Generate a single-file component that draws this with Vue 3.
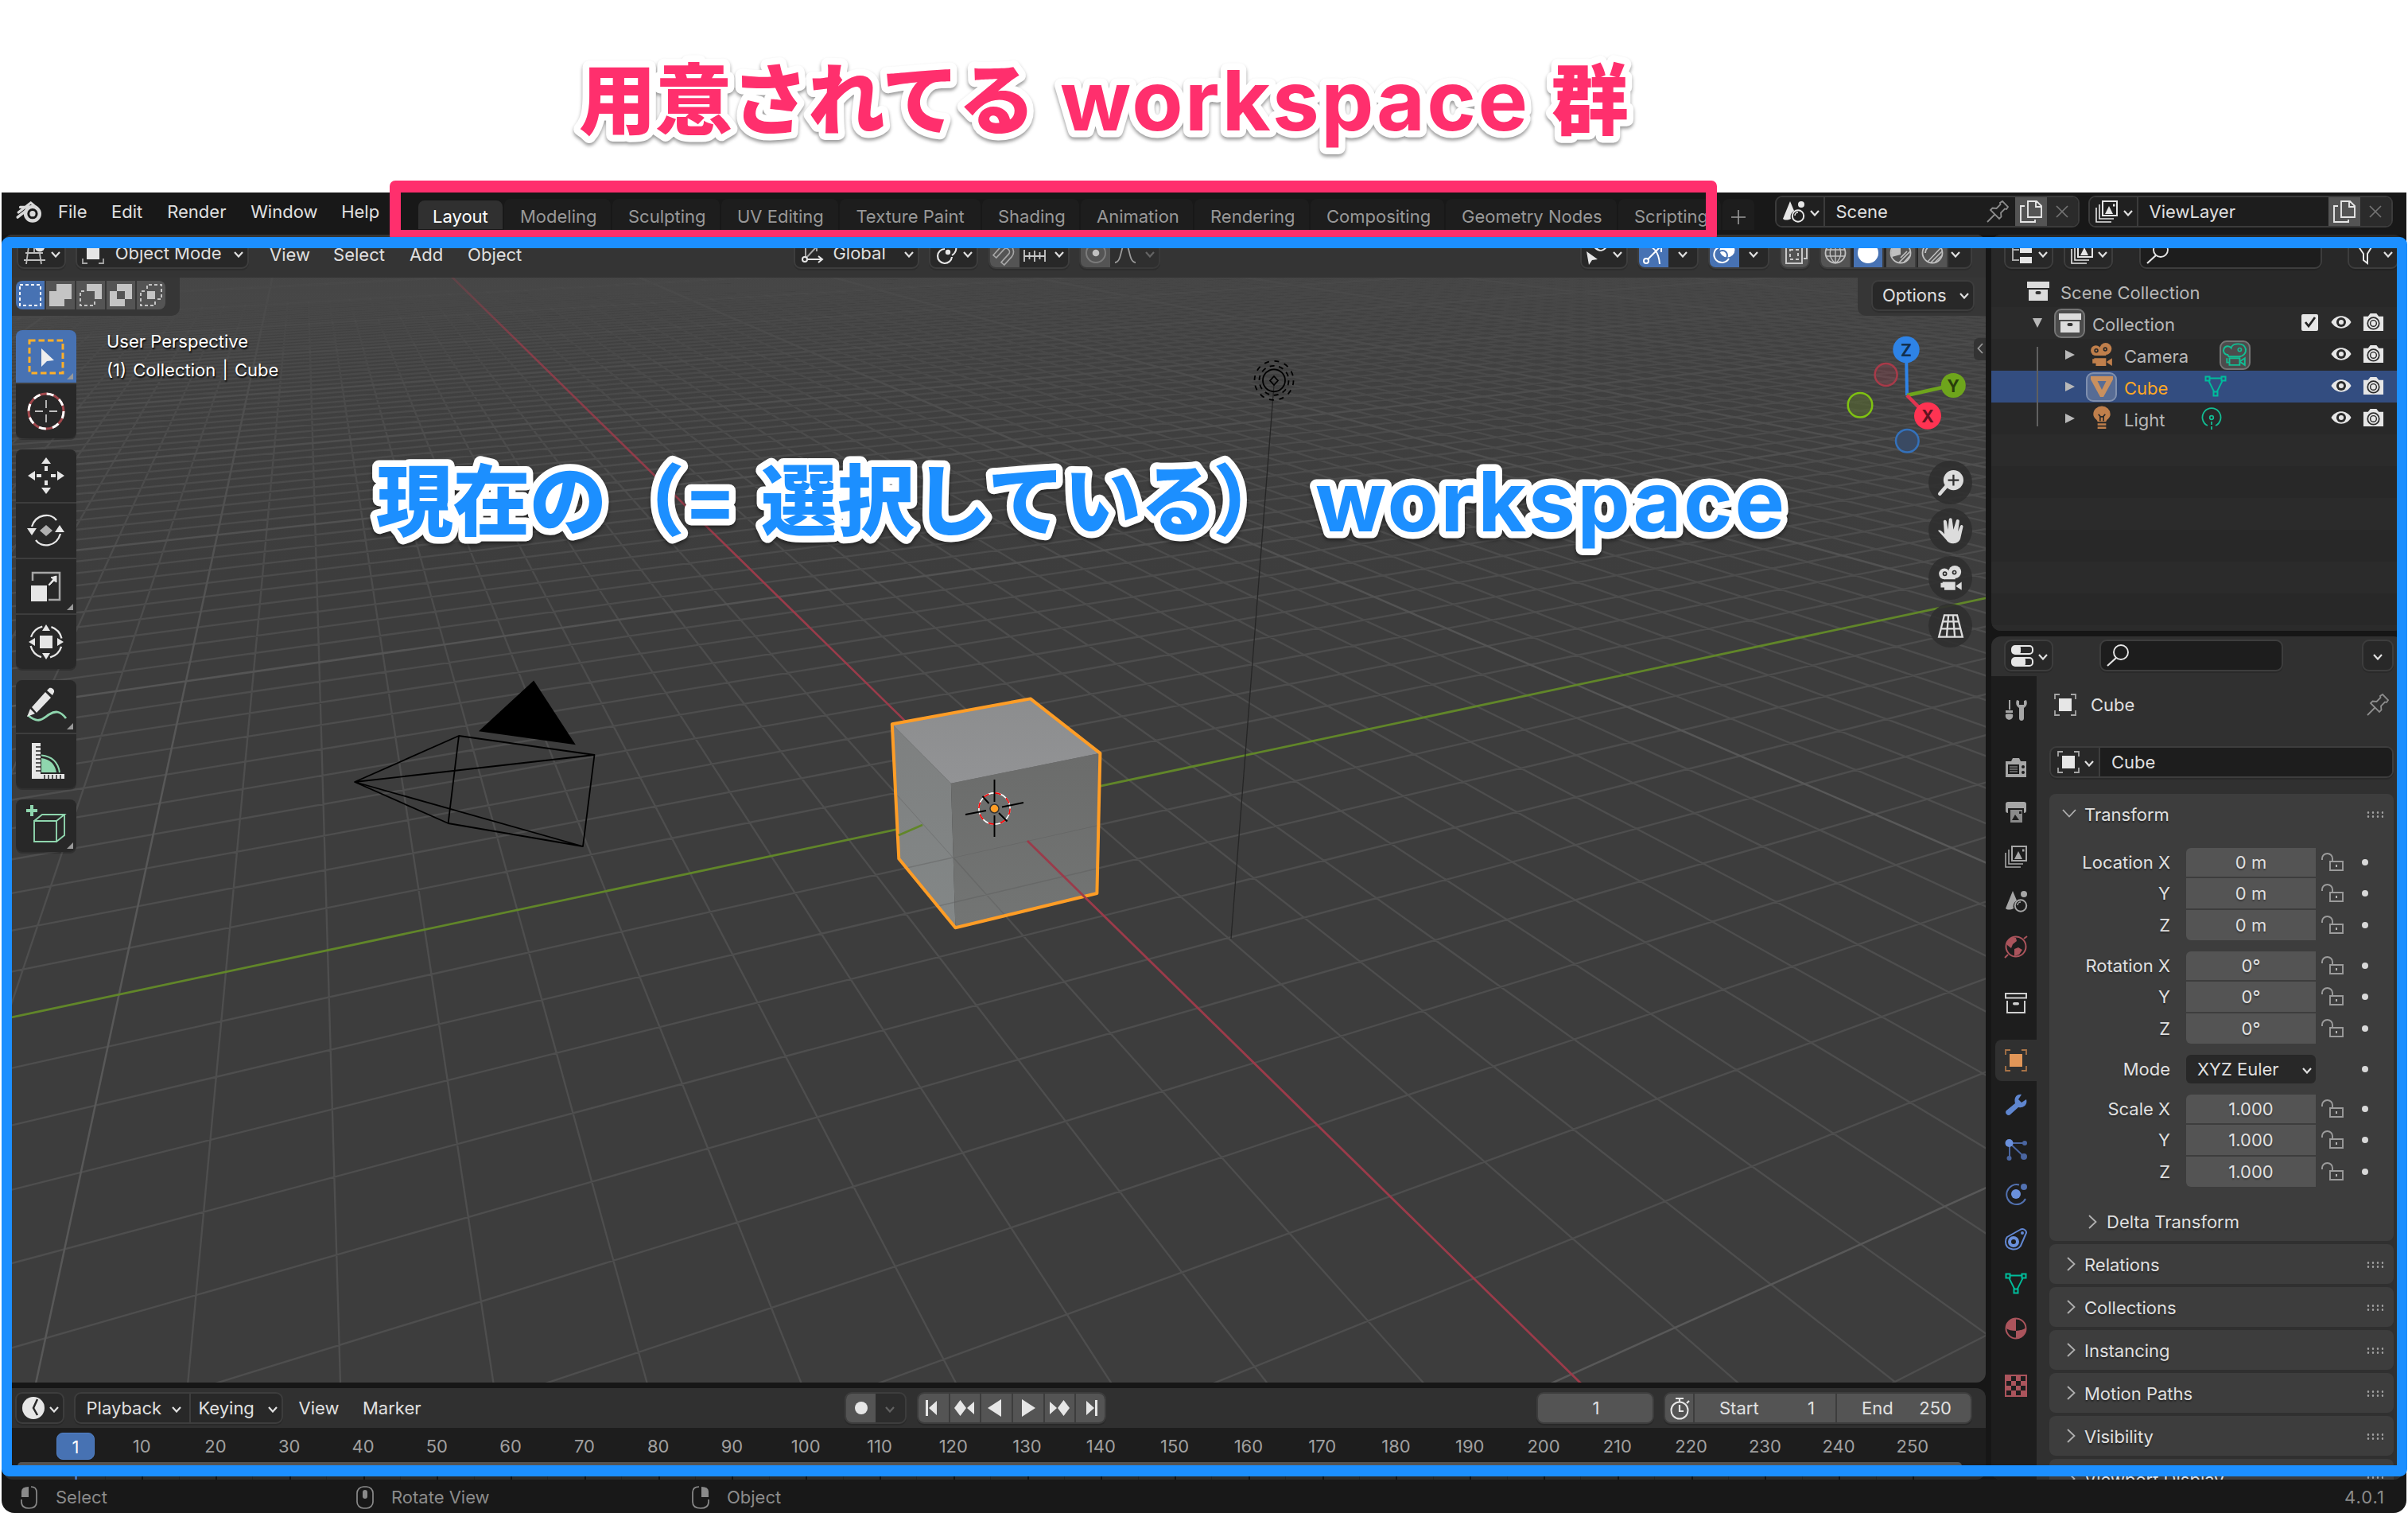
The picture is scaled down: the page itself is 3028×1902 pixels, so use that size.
<script setup>
import { h } from 'vue'

const L = '#e6e6e6'
const G = '#a6a6a6'
const pic = (c) =>
  `<path d="M9 1h18v18H9z" fill="none" stroke="${c}" stroke-width="2"/><path d="M12 17l5-10 5 10zM22 4.500h2.500v3H22z" fill="${c}"/><path d="M5 5v18h18M1 9v18h19" fill="none" stroke="${c}" stroke-width="1.600"/>`
const box = (c, d) =>
  `<rect x="6" y="6" width="16" height="16" fill="${c}"/><path d="M1 7V1h6M21 1h6v6M27 21v6h-6M7 27H1v-6" fill="none" stroke="${d}" stroke-width="1.800"/>`
const movie = (c, e) =>
  `<circle cx="7" cy="9" r="6" fill="${c}"/><circle cx="18.500" cy="7" r="7" fill="${c}"/><path d="M7 8h12v7H7zM5 18h14v9H7v-3H3v-5h2zM20 22l6-4v9l-6-4z" fill="${c}"/><circle cx="7.500" cy="9" r="1.800" fill="none" stroke="${e}" stroke-width="1.500"/><circle cx="18" cy="7.500" r="1.800" fill="none" stroke="${e}" stroke-width="1.500"/>`
const mesh = (c) =>
  `<path d="M7 3.500h14M5.500 7l7 14M22.500 7l-7 14" fill="none" stroke="${c}" stroke-width="1.800"/><path d="M1.500 1.500h5v5h-5zM21.500 1.500h5v5h-5zM11.500 20.500h5v5h-5z" fill="none" stroke="${c}" stroke-width="2"/>`
const sceneIc = (c) =>
  `<path d="M1 23L10 1l5 12a9 9 0 0 0-4 10c-4 2-8 2-10 0z" fill="${c}"/><circle cx="24" cy="5" r="4" fill="${c}"/><circle cx="20" cy="19.500" r="7.200" fill="none" stroke="${c}" stroke-width="2"/><path d="M16 19a4 4 0 0 1 4-4" fill="none" stroke="${c}" stroke-width="1.500"/>`
const dash = (x, y, w, c) =>
  `<rect x="${x}" y="${y}" width="${w}" height="${w}" fill="none" stroke="${c}" stroke-width="2" stroke-dasharray="4 3"/>`

const icons = {
  blender: `<path d="M2 14.500L16 3.500M4 8.500h11M16 3.500l7 6" fill="none" stroke="#d8d8d8" stroke-width="2.800" stroke-linecap="round"/><path d="M1 20l9-7" stroke="#d8d8d8" stroke-width="3" stroke-linecap="round"/><circle cx="18" cy="16" r="8" fill="none" stroke="#d8d8d8" stroke-width="4"/><circle cx="18" cy="16" r="3.300" fill="#d8d8d8"/>`,
  view3d: `<path d="M6 6L3 28M2 14h22M0 23h27M13 5v8M20 15l2 13" fill="none" stroke="#bdbdbd" stroke-width="1.800"/><circle cx="20" cy="6" r="6.500" fill="${L}"/>`,
  obj: box(L, G),
  objOrange: box('#e19658', '#a87347'),
  axes: `<path d="M6 0v21M6 21L20 6M20 6h-6M20 6v6M2 4l4-4 4 4" fill="none" stroke="${G}" stroke-width="2"/><path d="M8 22h18M22 18l5 4-5 4" fill="none" stroke="${L}" stroke-width="2"/><circle cx="5" cy="22" r="3" fill="#282828" stroke="${L}" stroke-width="2"/>`,
  pivot: `<path d="M11 9a9 9 0 1 0 9 10" fill="none" stroke="${L}" stroke-width="2.200"/><circle cx="15" cy="13" r="3.200" fill="${L}"/><path d="M20 17c5-3 7-9 4-14l-8-2" fill="none" stroke="${L}" stroke-width="2"/>`,
  magnet: `<g transform="rotate(42 14 14)"><path d="M4 27V12a10 10 0 0 1 20 0v15h-5.500V12a4.500 4.500 0 0 0-9 0v15z" fill="none" stroke="${G}" stroke-width="1.800"/></g>`,
  incr: `<path d="M1 10v15M27 10v15M1 18h26M7.500 13v9M14 11v14M20.500 13v9" stroke="#c8c8c8" stroke-width="1.800"/><path d="M22 1h6v3h-6z" fill="${L}"/>`,
  prop: `<circle cx="14" cy="14" r="12" fill="none" stroke="#7b7b7b" stroke-width="2"/><circle cx="14" cy="14" r="4.300" fill="#c0c0c0"/>`,
  smooth: `<path d="M1 26C10 26 8 3 14 3s4 23 13 23" fill="none" stroke="#9a9a9a" stroke-width="1.800"/>`,
  vis: `<path d="M0 12l14 10-7 1-4 6z" fill="${L}"/><path d="M8 5c5-7 15-7 19 0-4 9-15 9-19 0z" fill="${L}"/><circle cx="18" cy="5" r="3.800" fill="${L}" stroke="#282828" stroke-width="2.500"/>`,
  gizmo: `<path d="M0 4c12 0 20 8 21 24" fill="none" stroke="#fff" stroke-width="2"/><path d="M5 23L23 5M23 5h-8M23 5v8" fill="none" stroke="#fff" stroke-width="2"/><circle cx="4" cy="24" r="3" fill="#4772b3" stroke="#fff" stroke-width="2"/>`,
  overlay: `<circle cx="17" cy="10" r="9.500" fill="#fff"/><path d="M6 7a10 10 0 1 0 13 14" fill="none" stroke="#fff" stroke-width="2"/><circle cx="11" cy="17" r="6" fill="none" stroke="#4772b3" stroke-width="2"/>`,
  xray: `<path d="M1 5h20v22H1zM8 2h19v19h-4" fill="none" stroke="#c8c8c8" stroke-width="2"/><path d="M6 10h10v12H6z" fill="none" stroke="#c8c8c8" stroke-width="2" stroke-dasharray="4 3"/>`,
  wire: `<circle cx="14" cy="14" r="12.500" fill="none" stroke="#c0c0c0" stroke-width="1.800"/><path d="M2 10h24M2 18h24M14 1v26M14 1c-9 7-9 19 0 26M14 1c9 7 9 19 0 26" fill="none" stroke="#c0c0c0" stroke-width="1.400"/>`,
  solid: `<circle cx="14" cy="14" r="13" fill="#fff"/>`,
  matprev: `<circle cx="14" cy="14" r="12.500" fill="none" stroke="#c0c0c0" stroke-width="1.800"/><path d="M14 1v15L3 19A13 13 0 0 1 14 1z" fill="#c0c0c0"/><path d="M12 26L26 12M18 26l8-9M14 20l8-8" stroke="#c0c0c0" stroke-width="1.700"/>`,
  render: `<circle cx="14" cy="14" r="12.500" fill="none" stroke="#c0c0c0" stroke-width="1.800"/><path d="M12 26L26 12M17 26l9-9M8 25L25 7" stroke="#c0c0c0" stroke-width="1.500"/><path d="M5 14a9 9 0 0 1 9-9" fill="none" stroke="#c0c0c0" stroke-width="2"/>`,
  outl: `<path d="M2 0v24M2 10h8M2 23h8" fill="none" stroke="${G}" stroke-width="2"/><path d="M11 6h15v8H11zM11 19h15v8H11z" fill="${L}"/>`,
  vlay: pic(L),
  vlayG: pic(G),
  search: `<circle cx="18" cy="10" r="9" fill="none" stroke="${L}" stroke-width="1.900"/><path d="M12 17L1 27" stroke="${L}" stroke-width="2.200"/>`,
  funnel: `<path d="M3 2h22L17 15v12l-5-4v-8z" fill="none" stroke="${L}" stroke-width="2"/>`,
  coll: `<path d="M0 2h28v8H0zM2 12h24v14H2z" fill="#dcdcdc"/><rect x="10.500" y="14" width="7" height="4" rx="2" fill="#333"/>`,
  collLine: `<path d="M1 2h26v5.500H1zM3 11v15h22V11" fill="none" stroke="#d0d0d0" stroke-width="2"/><rect x="10" y="13" width="8" height="3.500" rx="1.700" fill="#d0d0d0"/>`,
  eye: `<path d="M0.500 14C7 3 21 3 27.500 14 21 25 7 25 .5 14z" fill="${L}"/><circle cx="14" cy="14" r="6.500" fill="#2a2a2a"/><circle cx="14" cy="14" r="3.300" fill="${L}"/>`,
  cam: `<path d="M1 6h6l3-4h8l3 4h6v19H1z" fill="${L}"/><circle cx="14" cy="15" r="7.500" fill="none" stroke="#2a2a2a" stroke-width="1.800"/><circle cx="14" cy="15" r="4" fill="none" stroke="#2a2a2a" stroke-width="1.500"/>`,
  camObj: movie('#c07f4b', '#282828'),
  camNav: movie('#dcdcdc', '#2f2f2f'),
  camData: `<path d="M5 14a5 5 0 1 1 4-8c1-6 15-7 17 1 1 5-3 9-8 9H6zM7 18h12v8H7zM19 22l6-4v8l-6-4M4 18v5h3" fill="none" stroke="#12bd93" stroke-width="1.800"/><circle cx="19" cy="8" r="2" fill="none" stroke="#12bd93" stroke-width="1.500"/>`,
  meshObj: `<path d="M0 1h28v4L16 27h-4L0 5z" fill="#c9905f"/><path d="M8.500 7h11L14 18z" fill="#576c95"/>`,
  mesh: mesh('#00bd9b'),
  bulb: `<path d="M9 18c0-3-5-4-5-9a10 9.500 0 0 1 20 0c0 5-5 6-5 9z" fill="#c07f4b"/><path d="M9 21h10M9 25h10" stroke="#c07f4b" stroke-width="2.200"/><path d="M10 9l2.500 3h3L18 9M12 12v5M16 12v5" fill="none" stroke="#282828" stroke-width="1.500"/>`,
  light: `<path d="M9 23A11.500 11.500 0 1 1 19 23" fill="none" stroke="#12bd93" stroke-width="1.800"/><circle cx="14" cy="13" r="2.300" fill="none" stroke="#12bd93" stroke-width="1.700"/><path d="M14 18v10" stroke="#12bd93" stroke-width="1.800" stroke-dasharray="4 2"/>`,
  propEd: `<rect x="1" y="2" width="26" height="10" rx="4" fill="none" stroke="${L}" stroke-width="2"/><rect x="1" y="2" width="11" height="10" rx="3" fill="${L}"/><rect x="1" y="17" width="26" height="10" rx="4" fill="none" stroke="${L}" stroke-width="2"/><rect x="1" y="17" width="17" height="10" rx="3" fill="${L}"/>`,
  pin: `<path d="M20 1l7 7-2 3-2-.5-5 5 .5 5-2.500 2.500L5 12l2.500-2.500 5 .5 5-5L17 3zM10 18L1 27" fill="none" stroke="#8c8c8c" stroke-width="1.800"/>`,
  copy: `<path d="M10 1h11l6 6v14H10zM20 1v7h7M6 7H1v20h18v-3" fill="none" stroke="${L}" stroke-width="1.900"/>`,
  x: `<path d="M7 7l14 14M21 7L7 21" stroke="#747474" stroke-width="1.700"/>`,
  tool: `<path d="M6 1v12" stroke="${G}" stroke-width="2"/><path d="M1 14h9v3h-9zM1 19c0-1 9-1 9 0 2 9-11 9-9 0z" fill="${G}"/><path d="M15 1c-2 5 0 8 3 10v13c0 4 6 4 6 0V11c3-2 5-5 3-10l-3 1v5h-6V2z" fill="${G}"/>`,
  rend: `<path d="M1 6h7l2-4h8l2 4h7v20H1z" fill="${G}"/><path d="M4 10h14v12H4z" fill="#1d1d1d"/><path d="M6 13h10M6 16h10M6 19h10" stroke="${G}" stroke-width="1"/><circle cx="23" cy="13" r="2" fill="#1d1d1d"/><circle cx="23" cy="20" r="2" fill="#1d1d1d"/>`,
  out: `<path d="M1 12V4q0-3 3-3h20q3 0 3 3v8q0 3-3 3V9H4v6q-3 0-3-3z" fill="${G}"/><path d="M7 11h15v16H7z" fill="#8a8a8a"/><path d="M9 24l4-7 5 7zM18 13h3v3h-3z" fill="#1d1d1d"/>`,
  sceneL: sceneIc(L),
  sceneG: sceneIc(G),
  world: `<circle cx="14" cy="14" r="12.500" fill="none" stroke="#ab545c" stroke-width="2"/><path d="M24 4l4-3M4 24l-4 4" stroke="#ab545c" stroke-width="2"/><path d="M3 8c3-6 8-6 11-5l1 4-5 4-2 5-5-4zM12 17l5-2 5 3-4 6-6 2z" fill="#ab545c"/>`,
  wrench: `<path d="M2 21L13 12C11 5 15 0 21 1l-4 6 4 4 6-4c2 7-4 11-10 10L7 26c-3 3-8-2-5-5z" fill="#5f86d0"/>`,
  part: `<path d="M6 6h18M6 6v18M6 6l18 17" stroke="#4a65a0" stroke-width="2"/><circle cx="5.500" cy="6" r="5" fill="#6a90dc"/><circle cx="25" cy="6" r="3" fill="#4a65a0"/><circle cx="5.500" cy="25" r="3" fill="#4a65a0"/><circle cx="24" cy="23" r="4" fill="#4a65a0"/>`,
  phys: `<path d="M18 2.500A12.500 12.500 0 1 0 26 20" fill="none" stroke="#5271b0" stroke-width="2"/><circle cx="14" cy="14" r="6" fill="#6a90dc"/><circle cx="24" cy="5" r="4" fill="#5271b0"/>`,
  cons: `<path d="M3 11L19 2c5-3 10 2 7 6L20 22C16 29 1 28 1 17q0-4 2-6z" fill="none" stroke="#6287d2" stroke-width="2"/><circle cx="11" cy="17" r="5" fill="none" stroke="#6a90dc" stroke-width="4"/><circle cx="22" cy="6" r="2" fill="#6287d2"/>`,
  mat: `<circle cx="14" cy="14" r="12.500" fill="none" stroke="#ab545c" stroke-width="2"/><path d="M14 1v16C9 17 4 16 1 13 2 6 7 1 14 1zM14 17c5 0 10-2 13-4 0 8-6 14-13 14z" fill="#ab545c"/>`,
  tex: `<rect x="1" y="1" width="26" height="26" fill="none" stroke="#ab545c" stroke-width="2"/><path d="M2 2h6v6H2zM14 2h6v6h-6zM8 8h6v6H8zM20 8h6v6h-6zM2 14h6v6H2zM14 14h6v6h-6zM8 20h6v6H8zM20 20h6v6h-6z" fill="#ab545c"/>`,
  lock: `<path d="M1 10V8a6.500 6 0 0 1 13 0v5M11 12h16v11H11z" fill="none" stroke="#9b9b9b" stroke-width="1.900"/><path d="M19 16v3" stroke="#b5b5b5" stroke-width="2"/>`,
  clock: `<circle cx="14" cy="14" r="14" fill="${L}"/><path d="M19 3l-5 11 5 9" fill="none" stroke="#282828" stroke-width="2.500"/>`,
  stop: `<circle cx="14" cy="17" r="10.500" fill="none" stroke="${L}" stroke-width="2"/><path d="M14 10v8h5M14 6V2M9 2h10M23 8l3-3" fill="none" stroke="${L}" stroke-width="2.200"/>`,
  rec: `<circle cx="14" cy="14" r="8" fill="${L}"/>`,
  first: `<path d="M5 4h3v20H5zM9 14l10-9v18z" fill="${L}"/>`,
  prevK: `<path d="M1 14L8.500 4 16 14 8.500 24zM17 14l9-8v16z" fill="${L}"/>`,
  prev: `<path d="M4 14L21 3v22z" fill="${L}"/>`,
  next: `<path d="M24 14L7 3v22z" fill="${L}"/>`,
  nextK: `<path d="M27 14L19.500 4 12 14l7.500 10zM11 14L2 6v16z" fill="${L}"/>`,
  last: `<path d="M23 4h-3v20h3zM19 14L9 5v18z" fill="${L}"/>`,
  m1: `<path d="M1 14V7q0-6 9-6v13z" fill="#8a8a8a"/><path d="M13 1q7 0 7 7v12q0 8-9.500 8T1 20v-3" fill="none" stroke="#8a8a8a" stroke-width="1.700"/>`,
  m2: `<rect x="1" y="1" width="20" height="27" rx="8" fill="none" stroke="#8a8a8a" stroke-width="1.700"/><rect x="8" y="5" width="6" height="11" rx="3" fill="#8a8a8a"/>`,
  m3: `<path d="M21 14V7q0-6-9-6v13z" fill="#8a8a8a"/><path d="M9 1Q1 1 1 8v12q0 8 10 8t10-8v-3" fill="none" stroke="#8a8a8a" stroke-width="1.700"/>`,
  sSet: dash(1, 1, 26, '#fff'),
  sExt: `<path d="M9 0h19v19h-9v9H0V9h9z" fill="#c4c4c4"/>`,
  sSub: `<path d="M9 0h19v19h-9V9H9z" fill="#c4c4c4"/><path d="M6 9H1v18h18v-5" fill="none" stroke="#c4c4c4" stroke-width="2" stroke-dasharray="4 3"/>`,
  sInv: `<path fill-rule="evenodd" d="M9 0h19v19h-9v9H0V9h9zM9 9v10h10V9z" fill="#c4c4c4"/>`,
  sInt: `<path d="M9 9h10v10H9z" fill="#c4c4c4"/><path d="M9 6V1h18v18h-5M6 9H1v18h18v-5" fill="none" stroke="#c4c4c4" stroke-width="2" stroke-dasharray="4 3"/>`,
  zoom: `<circle cx="17" cy="11" r="11" fill="#dcdcdc"/><path d="M9 18l-7 8" stroke="#dcdcdc" stroke-width="4" stroke-linecap="round"/><path d="M17 5v12M11 11h12" stroke="#2f2f2f" stroke-width="2"/>`,
  hand: `<path d="M0 14c2-1 4 0 7 4L6 4c0-2 3-2 3.500 0L11 13l1-11c0-2.500 3.500-2.500 3.500 0L17 13l3-10c.5-2 3.500-1.500 3.500.5L22 15l2.500-6c1-2 3.500-1 3 1L25 21c-1 9-13 9-16 3z" fill="#dcdcdc"/>`,
  persp: `<path d="M7 2h14l6 24H1zM5 9h18M3 17h22M11.500 2L9.500 26M16.500 2l2 24" fill="none" stroke="#dcdcdc" stroke-width="2"/>`
}
const tools = {
  tSel: `<rect x="3" y="4" width="42" height="41" fill="none" stroke="#ffaf29" stroke-width="3" stroke-dasharray="7.500 4"/><path d="M18 14l16 15-9 1-7 7z" fill="#eee"/>`,
  tCur: `<circle cx="24" cy="24" r="22" fill="none" stroke="#a0474c" stroke-width="3"/><circle cx="24" cy="24" r="22" fill="none" stroke="#fff" stroke-width="3" stroke-dasharray="9 8.280"/><path d="M24 10v10M24 28v10M10 24h10M28 24h10" stroke="#c0c0c0" stroke-width="1.800"/>`,
  tMove: `<path d="M24 1l6 8H18zM24 47l6-8H18zM1 24l9-6v12zM47 24l-9-6v12zM22 12h4v6h-4zM22 30h4v6h-4zM12 22h6v4h-6zM30 22h6v4h-6z" fill="${L}"/>`,
  tRot: `<path d="M6 19C11 3 30 1 37 11M42 28C37 45 18 46 11 36" fill="none" stroke="${L}" stroke-width="2.300"/><path d="M0 21h12l-6 9zM35 26h12l-6-9z" fill="${L}"/><path d="M24 17l8 7-8 7-8-7z" fill="#b0b0b0"/>`,
  tScale: `<path d="M7 17V7h34v34H27" fill="none" stroke="${G}" stroke-width="2.500"/><path d="M5 23h20v20H5z" fill="${L}"/><path d="M27 22l6-7-3-2 7-2 0 8-3-2-6 6z" fill="${L}" stroke="${L}"/>`,
  tXf: `<circle cx="24" cy="24" r="20" fill="none" stroke="${L}" stroke-width="2.300" stroke-dasharray="20 11.400" stroke-dashoffset="-6"/><path d="M16 16h16v16H16zM24 2l5 8H19zM24 46l5-8H19zM2 24l8-5v10zM46 24l-8-5v10z" fill="${L}"/>`,
  tAnn: `<path d="M1 35C15 47 20 39 28 34s14-4 21 5" fill="none" stroke="#8fd6ae" stroke-width="2.800"/><path d="M0 37l4-10 6 6zM6 25L23 6l7 7-18 19zM25 4l3-3c3-1 7 2 6 5l-2 4z" fill="${L}"/>`,
  tMeas: `<path d="M6 1h11v39h30v6H6zM6 44h-1z" fill="${L}"/><path d="M11 6h6M11 11h6M11 16h6M11 21h6M11 26h6M11 31h6M11 36h6M22 46v-5M27 46v-5M32 46v-5M37 46v-5M42 46v-5" stroke="#282828" stroke-width="1.500"/><path d="M18 38V20q16 2 19 18z" fill="#8fd6ae"/><path d="M18 16.500q20 2 23 21.500" fill="none" stroke="#8fd6ae" stroke-width="2"/>`,
  tAdd: `<path d="M6-2v14M-1 5h14" stroke="#8fd6ae" stroke-width="4"/><path d="M9 18h28v26H9zM9 18l10-8h28l-10 8M47 10v26l-10 8" fill="none" stroke="#8fd6ae" stroke-width="1.900"/>`
}

const Ic = (p) => h('svg', { viewBox: '0 0 28 28', width: p.s || 28, height: p.s || 28, style: 'overflow:visible;flex:none;display:block', innerHTML: icons[p.n] })
Ic.props = ['n', 's']
const Tool = (p) => h('svg', { viewBox: '0 0 48 48', width: 48, height: 48, style: 'overflow:visible;display:block', innerHTML: tools[p.n] })
Tool.props = ['n']
const Chev = (p) => h('svg', { viewBox: '0 0 12 8', width: 12, height: 8, style: 'flex:none;display:block;margin-top:3px;opacity:' + (p.dim ? 0.3 : 1), innerHTML: '<path d="M1 1l5 5.500L11 1" fill="none" stroke="#e0e0e0" stroke-width="2.200"/>' })
Chev.props = ['dim']

const menus = [['File', 67], ['Edit', 70.2], ['Render', 105], ['Window', 114], ['Help', 60]]
const tabs = [
  ['Layout', 108], ['Modeling', 136], ['Sculpting', 137], ['UV Editing', 149.4], ['Texture Paint', 178.6], ['Shading', 124],
  ['Animation', 143], ['Rendering', 146], ['Compositing', 170], ['Geometry Nodes', 217], ['Scripting', 131]
]
const toolGroups = [
  [['tSel', 1], ['tCur', 0]],
  [['tMove', 0], ['tRot', 0], ['tScale', 1], ['tXf', 0]],
  [['tAnn', 1], ['tMeas', 0]],
  [['tAdd', 1]]
]
const propTabs = [
  ['tool'],
  ['rend', 'out', 'vlayG', 'sceneG', 'world'],
  ['collLine'],
  ['objOrange', 'wrench', 'part', 'phys', 'cons', 'mesh', 'mat'],
  ['tex']
]
const groups = [
  [['Location X', '0 m'], ['Y', '0 m'], ['Z', '0 m']],
  [['Rotation X', '0°'], ['Y', '0°'], ['Z', '0°']],
  [['Mode', 'XYZ Euler', 1]],
  [['Scale X', '1.000'], ['Y', '1.000'], ['Z', '1.000']]
]
const panels = ['Relations', 'Collections', 'Instancing', 'Motion Paths', 'Visibility', 'Viewport Display']
const frames = Array.from({ length: 25 }, (_, i) => (i + 1) * 10)

// Perspective projection of the ground plane
const CX = 1250.5, CY = 1016.5, F = 1735, D = 17.99
const cam = (x, y, z) => [
  0.41 * x + 0.912 * y - 0.0133 * z,
  -0.4017 * x + 0.1936 * y + 0.895 * z,
  D - (0.8188 * x - 0.3617 * y + 0.4458 * z)
]
const toPx = ([a, b, d]) => [CX + (F * a) / d, CY - (F * b) / d]
const px = (x, y, z) => toPx(cam(x, y, z)).map((v) => v.toFixed(1)).join(',')
const seg = (p, q) => {
  let a = cam(...p), b = cam(...q)
  const n = 1
  if (a[2] < n && b[2] < n) return ''
  const cut = (u, v) => { const t = (n - u[2]) / (v[2] - u[2]); return u.map((c, i) => c + t * (v[i] - c)) }
  if (a[2] < n) a = cut(a, b)
  if (b[2] < n) b = cut(b, a)
  const A = toPx(a), B = toPx(b)
  return `M${A[0].toFixed(1)} ${A[1].toFixed(1)}L${B[0].toFixed(1)} ${B[1].toFixed(1)}`
}
const R = 200
let minor = '', major = ''
for (let k = -R; k <= R; k++) {
  if (!k) continue
  const s = seg([k, -R, 0], [k, R, 0]) + seg([-R, k, 0], [R, k, 0])
  if (k % 10) minor += s
  else major += s
}
const low = [px(-1, -1, 0), px(1, -1, 0), px(1, 1, 0), px(1, 1, -1), px(1, -1, -1), px(-1, -1, -1)].join(' ')
const face = {
  top: [px(-1, -1, 1), px(-1, 1, 1), px(1, 1, 1), px(1, -1, 1)].join(' '),
  left: [px(-1, -1, 1), px(1, -1, 1), px(1, -1, -1), px(-1, -1, -1)].join(' '),
  right: [px(1, -1, 1), px(1, 1, 1), px(1, 1, -1), px(1, -1, -1)].join(' '),
  rim: [px(-1, -1, 1), px(-1, 1, 1), px(1, 1, 1), px(1, 1, -1), px(1, -1, -1), px(-1, -1, -1)].join(' ')
}
const axisX1 = seg([-R, 0, 0], [-1, 0, 0])
const axisX2 = seg([1, 0, 0], [30, 0, 0])
const axisY1 = seg([0, -40, 0], [0, -1, 0])
const axisY2 = seg([0, 1, 0], [0, R, 0])
</script>

<template>
  <div class="page">
    <div class="app">
      <header class="topbar">
        <Ic n="blender" s="31" class="logo" />
        <nav class="menus"><span v-for="m in menus" :key="m[0]" :style="{ width: m[1] + 'px' }">{{ m[0] }}</span></nav>
        <div class="tabs">
          <span v-for="(t, i) in tabs" :key="t[0]" class="tab" :class="{ on: !i }" :style="{ width: t[1] - 2 + 'px' }">{{ t[0] }}</span>
          <span class="tab plus"><svg width="20" height="20"><path d="M10 1v18M1 10h18" stroke="#9a9a9a" stroke-width="1.600" /></svg></span>
        </div>
        <div class="idbox first">
          <div class="idicon"><Ic n="sceneL" /><Chev /></div>
          <div class="idname"><span>Scene</span><Ic n="pin" /></div>
          <div class="idbtn lit"><Ic n="copy" /></div><div class="idbtn"><Ic n="x" /></div>
        </div>
        <div class="idbox">
          <div class="idicon"><Ic n="vlay" /><Chev /></div>
          <div class="idname"><span>ViewLayer</span></div>
          <div class="idbtn lit"><Ic n="copy" /></div><div class="idbtn"><Ic n="x" /></div>
        </div>
      </header>

      <div class="work">
        <div class="left">
          <section class="viewport">
            <svg class="scene" viewBox="4 295 2493 1443" width="2493" height="1443">
              <defs>
                <linearGradient id="gm" gradientUnits="userSpaceOnUse" x1="0" y1="295" x2="0" y2="1000">
                  <stop offset="0" stop-color="#525252" stop-opacity=".12" /><stop offset=".12" stop-color="#525252" stop-opacity=".34" />
                  <stop offset=".35" stop-color="#4f4f4f" stop-opacity=".75" /><stop offset="1" stop-color="#4e4e4e" />
                </linearGradient>
                <linearGradient id="gj" gradientUnits="userSpaceOnUse" x1="0" y1="295" x2="0" y2="1000">
                  <stop offset="0" stop-color="#4b4b4b" stop-opacity=".4" /><stop offset=".3" stop-color="#4e4e4e" /><stop offset="1" stop-color="#585858" />
                </linearGradient>
                <linearGradient id="gr" gradientUnits="userSpaceOnUse" x1="0" y1="295" x2="0" y2="700">
                  <stop offset="0" stop-color="#9b3b4a" stop-opacity="0" /><stop offset=".35" stop-color="#9b3b4a" stop-opacity=".75" /><stop offset="1" stop-color="#9b3b4a" />
                </linearGradient>
                <linearGradient id="bg" x1="0" y1="0" x2="0" y2="1"><stop offset="0" stop-color="#424242" /><stop offset=".3" stop-color="#3d3d3d" /></linearGradient>
                <linearGradient id="ft" x1="0" y1="0" x2="0" y2="1"><stop offset="0" stop-color="#8c8d8e" /><stop offset="1" stop-color="#929395" /></linearGradient>
                <linearGradient id="fl" x1="0" y1="0" x2="0" y2="1"><stop offset="0" stop-color="#7e8080" /><stop offset="1" stop-color="#838787" /></linearGradient>
                <linearGradient id="fr" x1="0" y1="0" x2="0" y2="1"><stop offset="0" stop-color="#6b6c6b" /><stop offset="1" stop-color="#737574" /></linearGradient>
                <clipPath id="lowc"><polygon :points="low" /></clipPath>
              </defs>
              <rect x="4" y="295" width="2493" height="1443" fill="url(#bg)" />
              <g fill="none" stroke-width="2.300">
                <path :d="minor" stroke="url(#gm)" /><path :d="major" stroke="url(#gj)" stroke-width="2.500" />
                <path :d="axisX1" stroke="url(#gr)" stroke-width="2.600" />
                <path :d="axisY1 + axisY2" stroke="#618629" stroke-width="2.800" />
              </g>
              <path d="M1602 484L1548 1180" stroke="#262626" stroke-width="1.300" />
              <g fill="none" stroke="#000" stroke-width="1.800">
                <path d="M1602 473l5 5.500-5 5.500-5-5.500z" /><circle cx="1602" cy="478.300" r="14" />
                <circle cx="1602" cy="478.300" r="18.500" stroke-dasharray="6 5.600" /><circle cx="1602" cy="478.300" r="24.500" stroke-dasharray="6 6.800" />
                <path d="M446 983L577 925 747.500 949 733 1064 563.600 1035zM577 925L563.600 1035M446 983L747.500 949M446 983L733 1064" stroke-linejoin="round" />
                <path d="M671 857L604 918.500 722 935z" fill="#000" />
              </g>
              <polygon :points="face.left" fill="url(#fl)" /><polygon :points="face.right" fill="url(#fr)" /><polygon :points="face.top" fill="url(#ft)" />
              <g clip-path="url(#lowc)" fill="none" opacity=".35"><path :d="minor" stroke="#555" stroke-width="1.500" /></g>
              <polygon :points="face.rim" fill="none" stroke="#ff9d26" stroke-width="4" stroke-linejoin="round" />
              <path :d="axisX2" stroke="#9b3b4a" stroke-width="2.800" />
              <path d="M1130 1049L1160 1036" stroke="#618629" stroke-width="2.800" transform="translate(0 1)" />
              <g fill="none">
                <circle cx="1250.500" cy="1016.500" r="19.600" stroke="#fff" stroke-width="1.600" />
                <circle cx="1250.500" cy="1016.500" r="19.600" stroke="#f00" stroke-width="1.600" stroke-dasharray="7.700 7.700" />
                <path d="M1250.500 980v28M1250.500 1025v27M1214 1024l26-5M1260 1014.500l27-5.500M1235.500 1001l8 9M1256 1022l10.500 10.500" stroke="#000" stroke-width="1.900" />
                <circle cx="1250.500" cy="1016.500" r="5.500" fill="#ff9d26" stroke="#333" stroke-width="1.500" />
              </g>
              <g class="giz">
                <circle cx="2371.600" cy="471" r="14" fill="#ff335222" stroke="#a83a49" stroke-width="2.500" />
                <circle cx="2339" cy="509.300" r="15.300" fill="#56693099" stroke="#7fc211" stroke-width="2.500" />
                <circle cx="2398.300" cy="554.300" r="14.300" fill="#3a4a63" stroke="#3471ba" stroke-width="2.500" />
                <path d="M2398 497L2397 440" stroke="#2e83e6" stroke-width="4" /><path d="M2398 497L2456 484" stroke="#6ea51c" stroke-width="4.500" /><path d="M2398 497L2424 523" stroke="#e03450" stroke-width="4.500" />
                <circle cx="2397" cy="439.500" r="16.700" fill="#2e83e6" /><circle cx="2456.300" cy="484.500" r="15.500" fill="#6ea51c" /><circle cx="2424" cy="522.700" r="17" fill="#ff3352" />
                <text x="2397" y="447.500" fill="#12304f">Z</text><text x="2456.300" y="492.500" fill="#293d0b">Y</text><text x="2424" y="530.500" fill="#5e1320">X</text>
              </g>
            </svg>

            <div class="vhead">
              <div class="w w-ed"><Ic n="view3d" /><Chev /></div>
              <div class="w w-mode"><Ic n="obj" /><span>Object Mode</span><Chev /></div>
              <nav class="vmenu"><span class="m-view">View</span><span class="m-sel">Select</span><span class="m-add">Add</span><span>Object</span></nav>
              <div class="w w-glob"><Ic n="axes" /><span>Global</span><Chev /></div>
              <div class="w w-piv"><Ic n="pivot" /><Chev /></div>
              <div class="w w-snap"><b class="seg g"><Ic n="magnet" s="26" /></b><Ic n="incr" class="mid" /><Chev /></div>
              <div class="w w-snap dimw"><b class="seg g"><Ic n="prop" /></b><Ic n="smooth" class="mid" /><Chev dim="1" /></div>
              <div class="w w-vis"><Ic n="vis" /><Chev /></div>
              <div class="w w-tog"><b class="seg blue"><Ic n="gizmo" /></b><Chev /></div>
              <div class="w w-tog"><b class="seg blue"><Ic n="overlay" /></b><Chev /></div>
              <div class="w w-x"><b class="seg g"><Ic n="xray" /></b></div>
              <div class="w w-shade"><b class="seg g"><Ic n="wire" /></b><b class="seg blue"><Ic n="solid" /></b><b class="seg g"><Ic n="matprev" /></b><b class="seg g"><Ic n="render" /></b><Chev /></div>
            </div>
            <div class="vsub">
              <div class="selmodes"><b v-for="(s, i) in ['sSet', 'sExt', 'sSub', 'sInv', 'sInt']" :key="s" :class="{ blue: !i }"><Ic :n="s" /></b></div>
              <div class="optwrap"><div class="w opt"><span>Options</span><Chev /></div></div>
            </div>
            <div class="toolbar">
              <div v-for="(g, gi) in toolGroups" :key="gi" class="tg">
                <div v-for="(t, ti) in g" :key="t[0]" class="tool" :class="{ blue: !gi && !ti, fst: !ti }"><Tool :n="t[0]" /><i v-if="t[1]"></i></div>
              </div>
            </div>
            <div class="info"><div>User Perspective</div><div class="obinfo">(1) Collection | Cube</div></div>
            <div class="navb"><b v-for="n in ['zoom', 'hand', 'camNav', 'persp']" :key="n"><Ic :n="n" s="32" /></b></div>
            <div class="nflap"><svg width="8" height="14"><path d="M7 1L1.500 7 7 13" fill="none" stroke="#999" stroke-width="1.800" /></svg></div>
          </section>

          <section class="timeline">
            <div class="thead">
              <div class="w w-ted"><Ic n="clock" /><Chev /></div>
              <div class="w w-pk"><span class="pb">Playback</span><Chev /><i class="dv"></i><span class="ky">Keying</span><Chev /></div>
              <span class="tm1">View</span><span class="tm2">Marker</span>
              <div class="w w-rec"><b class="seg g"><Ic n="rec" /></b><Chev dim="1" class="cc" /></div>
              <div class="w w-play"><b v-for="n in ['first', 'prevK', 'prev', 'next', 'nextK', 'last']" :key="n"><Ic :n="n" /></b></div>
              <div class="w w-cur">1</div>
              <div class="w w-range"><b><Ic n="stop" /></b><div class="st"><span>Start</span><span>1</span></div><div class="en"><span>End</span><span>250</span></div></div>
            </div>
            <div class="ruler">
              <span v-for="f in frames" :key="f" :style="{ left: 174.2 + (f - 10) * 9.278 + 'px' }">{{ f }}</span>
              <em>1</em>
            </div>
            <div class="tbar"></div>
            <div class="ticks"><i v-for="f in 50" :key="f" :class="{ big: f % 2 === 0 }" :style="{ left: 81.4 + f * 46.39 + 'px' }"></i><em></em></div>
          </section>
        </div>

        <div class="right">
          <section class="outliner">
            <div class="ohead">
              <div class="w w-ed"><Ic n="outl" /><Chev /></div>
              <div class="w w-ed o2"><Ic n="vlay" /><Chev /></div>
              <div class="w w-find"><Ic n="search" /></div>
              <div class="w w-fil"><Ic n="funnel" /><Chev /></div>
            </div>
            <div class="orow r0"><Ic n="coll" /><span class="ot">Scene Collection</span></div>
            <div class="orow alt r1"><svg width="12" height="14"><path d="M0 1h12L6 13z" fill="#b8b8b8" /></svg><b class="hl"><Ic n="coll" /></b><span class="ot">Collection</span>
              <div class="flags"><svg class="chk" width="21" height="21"><rect width="21" height="21" rx="2" fill="#e6e6e6" /><path d="M5 10l4 5 8-11" fill="none" stroke="#222" stroke-width="2.800" /></svg><Ic n="eye" s="26" /><Ic n="cam" s="27" /></div></div>
            <div class="orow r2"><svg width="12" height="14"><path d="M0 1v12l12-6z" fill="#b8b8b8" /></svg><b class="nh"><Ic n="camObj" s="30" /></b><span class="ot w1">Camera</span><b class="hl dat"><Ic n="camData" s="30" /></b>
              <div class="flags"><Ic n="eye" s="26" /><Ic n="cam" s="27" /></div></div>
            <div class="orow r2 sel"><svg width="12" height="14"><path d="M0 1v12l12-6z" fill="#b8b8b8" /></svg><b class="hl hb"><Ic n="meshObj" /></b><span class="ot w2">Cube</span><Ic n="mesh" />
              <div class="flags"><Ic n="eye" s="26" /><Ic n="cam" s="27" /></div></div>
            <div class="orow r2"><svg width="12" height="14"><path d="M0 1v12l12-6z" fill="#b8b8b8" /></svg><b class="nh"><Ic n="bulb" s="30" /></b><span class="ot w3">Light</span><Ic n="light" />
              <div class="flags"><Ic n="eye" s="26" /><Ic n="cam" s="27" /></div></div>
            <div v-for="n in 7" :key="n" class="orow" :class="{ alt: n % 2 }"></div>
            <div class="tree"></div>
          </section>

          <section class="props">
            <div class="phead">
              <div class="w w-ed"><Ic n="propEd" /><Chev /></div>
              <div class="w w-find pf"><Ic n="search" /></div>
              <div class="w w-dd"><Chev /></div>
            </div>
            <div class="pbody">
              <div class="ptabs">
                <div v-for="(g, i) in propTabs" :key="i" class="pg"><div v-for="t in g" :key="t" class="pt" :class="{ act: t === 'objOrange' }"><Ic :n="t" /></div></div>
              </div>
              <div class="pcont">
                <div class="crumb"><Ic n="obj" /><span>Cube</span><Ic n="pin" class="pn" /></div>
                <div class="namef w"><div class="ni"><Ic n="obj" /><Chev /></div><div class="nn">Cube</div></div>
                <div class="panel big">
                  <div class="ph"><svg class="dn" width="18" height="11"><path d="M1 1l8 8.500L17 1" fill="none" stroke="#b0b0b0" stroke-width="1.800" /></svg><span>Transform</span><i class="grip"></i></div>
                  <div v-for="(g, gi) in groups" :key="gi" class="grp">
                    <div v-for="(r, ri) in g" :key="ri" class="prow" :class="{ fst: !ri }">
                      <label>{{ r[0] }}</label>
                      <div v-if="r[2]" class="enum"><span>{{ r[1] }}</span><Chev /></div>
                      <div v-else class="num" :class="{ a: !ri, z: ri === 2 }">{{ r[1] }}</div>
                      <div class="lk"><Ic v-if="!r[2]" n="lock" /></div><i class="dot"></i>
                    </div>
                  </div>
                  <div class="delta"><svg width="11" height="18"><path d="M1 1l8.500 8L1 17" fill="none" stroke="#b0b0b0" stroke-width="1.800" /></svg><span>Delta Transform</span></div>
                </div>
                <div v-for="p in panels" :key="p" class="panel"><div class="ph"><svg class="rt" width="11" height="18"><path d="M1 1l8.500 8L1 17" fill="none" stroke="#b0b0b0" stroke-width="1.800" /></svg><span>{{ p }}</span><i class="grip"></i></div></div>
              </div>
            </div>
          </section>
        </div>
      </div>

      <footer class="status">
        <div class="s1"><Ic n="m1" /><span>Select</span></div>
        <div class="s2"><Ic n="m2" /><span>Rotate View</span></div>
        <div class="s3"><Ic n="m3" /><span>Object</span></div>
        <span class="ver">4.0.1</span>
      </footer>
    </div>

    <div class="frame pink"></div>
    <div class="frame azure"></div>
    <svg class="notes" width="3028" height="1902">
      <g class="note n1">
        <text x="728" y="161" font-size="97" textLength="574">用意されてる</text>
        <text x="1333" y="164" font-size="105" class="lat" textLength="588">workspace</text>
        <text x="1951" y="161" font-size="97">群</text>
      </g>
      <g class="note n2">
        <text x="473" y="665" font-size="97" textLength="290">現在の</text>
        <text x="764" y="665" font-size="97">（</text>
        <text x="860" y="663" font-size="97" class="lat">=</text>
        <text x="957" y="665" font-size="97" textLength="574">選択している</text>
        <text x="1525" y="665" font-size="97">）</text>
        <text x="1654" y="668" font-size="105" class="lat" textLength="590">workspace</text>
      </g>
    </svg>
  </div>
</template>

<style>
body { margin: 0; background: #fff; }
</style>

<style scoped>
* { box-sizing: border-box; }
.page { position: relative; width: 3028px; height: 1902px; overflow: hidden; background: #fff; font: 22px/28px Inter, sans-serif; color: #e0e0e0; white-space: nowrap; }
.app { margin: 0 2px; padding-top: 242px; height: 1902px; display: flex; flex-direction: column; }
.app > * { background: #181818; flex: none; }
b { font-weight: inherit; display: flex; align-items: center; justify-content: center; }
.topbar { height: 53px; display: flex; align-items: flex-start; }
.logo { margin: 9px 0 0 19px; }
.menus { display: flex; width: 474px; padding: 10px 0 0 21px; flex: none; }
.menus span { flex: none; }
.tabs { display: flex; align-items: flex-start; padding-top: 8px; gap: 2px; width: 1704px; flex: none; }
.tab { height: 39px; padding: 8px 0 0 20px; background: #1d1d1d; border-radius: 8px 8px 0 0; color: #989898; flex: none; }
.tab.on { background: #303030; color: #fff; margin-top: 2px; height: 36px; padding: 6px 0 0 18px; }
.tab.plus { width: 40px; padding: 11px 0 0 10px; }
.idbox { display: flex; width: 383px; height: 40px; margin: 4px 0 0 11px; border: 2px solid #3b3b3b; border-radius: 9px; overflow: hidden; background: #1d1d1d; flex: none; }
.idbox.first { margin-left: 1.500px; }
.idicon { width: 61px; display: flex; align-items: center; justify-content: space-between; padding: 0 5px 0 7px; border-right: 2px solid #3b3b3b; background: #202020; }
.idname { flex: 1; display: flex; justify-content: space-between; padding: 4px 8px 0 14px; }
.idbtn { width: 39px; display: flex; align-items: center; justify-content: center; background: #2b2b2b; }
.idbtn.lit { background: #545454; width: 40px; }
.work { height: 1565px; display: flex; gap: 7px; padding: 0 4px 0 2px; background: #161616 !important; }
.left { width: 2493px; display: flex; flex-direction: column; gap: 7px; }
.viewport { position: relative; height: 1443px; border-radius: 12px; overflow: hidden; }
.scene { position: absolute; inset: 0; }
.giz text { font: 700 21px Inter, sans-serif; text-anchor: middle; }
.vhead { position: relative; height: 54px; background: #343434; display: flex; padding: 3px 0 0 16.600px; }
.w { height: 40px; display: flex; align-items: center; justify-content: space-between; padding: 0 5px 0 7px; border: 2px solid #3d3d3d; background: #282828; border-radius: 9px; flex: none; overflow: hidden; box-shadow: 0 2px 0 #0002; }
.w-ed { width: 62px; }
.w-mode { width: 218px; margin-left: 12px; padding: 0 5px 0 6px; }
.w-mode span { margin-left: 3px; margin-right: 4px; }
.vmenu { display: flex; padding: 8px 0 0 26.500px; width: 685.500px; flex: none; }
.vmenu span { flex: none; }
.m-view { width: 80px; } .m-sel { width: 96px; } .m-add { width: 73px; }
.w-glob { width: 158px; }
.w-glob span { margin-right: 11px; }
.w-piv { width: 62px; margin-left: 12px; }
.w-snap { width: 102px; margin-left: 13px; padding-left: 0; }
.w-snap .mid { margin-left: -6px; }
.dimw { background: #2f2f2f; border-color: #393939; margin-left: 12px; }
.seg { height: 40px; width: 37px; flex: none; }
.g { background: #545454; }
.blue { background: #4772b3 !important; }
.w-vis { width: 60px; margin-left: 528px; padding-left: 6px; }
.w-tog { width: 77px; margin-left: 12px; padding: 0 12px 0 0; }
.w-x { width: 38px; margin-left: 13px; padding: 0; }
.w-shade { width: 192px; margin-left: 12px; padding: 0 13px 0 0; }
.w-shade .seg { border-right: 2px solid #3d3d3d; width: 38px; }
.vsub { position: relative; display: flex; justify-content: space-between; height: 48px; }
.selmodes { width: 222px; background: #363636; border-radius: 0 0 10px 0; padding: 4px 0 0 16px; display: flex; gap: 2px; }
.selmodes b { width: 36px; height: 36px; background: #545454; }
.selmodes b:first-child { border-radius: 8px 0 0 8px; } .selmodes b:last-child { border-radius: 0 8px 8px 0; }
.optwrap { width: 161px; background: #363636; border-radius: 0 0 0 10px; padding: 3px 0 0 17px; }
.opt { width: 130px; padding: 0 5px 2px 12px; height: 39px; }
.toolbar { position: absolute; left: 16px; top: 119.800px; display: flex; flex-direction: column; gap: 14px; width: 76px; }
.tg { display: flex; flex-direction: column; gap: 2px; border-radius: 8px; overflow: hidden; background: #3d3d3d; box-shadow: 0 2px 0 #0003; }
.tool { position: relative; height: 68px; background: #282828; display: flex; align-items: center; justify-content: center; }
.tool.fst { height: 66px; }
.tool i { position: absolute; right: 4px; bottom: 4px; border: 4px solid; border-color: transparent #999 #999 transparent; }
.info { position: absolute; left: 130px; top: 116px; line-height: 36px; color: #fff; text-shadow: 1px 2px 2px #000; }
.obinfo { word-spacing: 2px; }
.navb { position: absolute; left: 2421px; top: 284px; display: flex; flex-direction: column; gap: 5px; }
.navb b { width: 55px; height: 55px; border-radius: 50%; background: #2f2f2fe8; }
.nflap { position: absolute; right: 0; top: 130px; width: 15px; height: 28px; background: #333; border-radius: 6px 0 0 6px; padding: 7px 0 0 4px; }
.nflap svg { display: block; margin-top: -1px; }
.timeline { height: 115px; background: #1d1d1d; border-radius: 12px; overflow: hidden; display: flex; flex-direction: column; }
.thead { height: 50px; flex: none; background: #303030; display: flex; align-items: flex-start; padding: 5px 0 0 15px; }
.w-ted { width: 62px; }
.w-pk { width: 263px; margin-left: 11.500px; padding: 0 5px 0 14px; }
.pb { width: 90px; margin-right: 8px; }
.ky { margin-right: 7px; }
.dv { width: 2px; height: 40px; background: #3d3d3d; }
.tm1 { margin: 6px 0 0 20px; width: 80.500px; } .tm2 { margin-top: 6px; width: 606px; }
.w-rec { width: 78px; padding: 0 13px 0 0; background: #2c2c2c; }
.w-play { width: 238px; margin-left: 13px; padding: 0; }
.w-play b { flex: 1; height: 40px; background: #545454; border-right: 2px solid #3d3d3d; padding-right: 2px; }
.w-play b:last-child { border: 0; padding: 0; }
.w-cur { width: 148px; margin-left: 541px; justify-content: center; background: #545454; }
.w-range { width: 388px; margin-left: 12px; padding: 0; background: #545454; }
.w-range b { width: 37px; height: 40px; border-right: 2px solid #3d3d3d; }
.st { width: 179px; display: flex; justify-content: space-between; padding: 6px 26px 6px 31px; border-right: 2px solid #3d3d3d; }
.en { width: 168px; display: flex; justify-content: space-between; padding: 0 24px 0 31px; }
.ruler { position: relative; height: 43px; flex: none; color: #a0a0a0; }
.ruler span { position: absolute; top: 9px; transform: translateX(-50%); }
.ruler em { position: absolute; left: 67px; top: 6px; width: 48px; height: 34px; line-height: 35px; background: #4772b3; border: 1px solid #5180c6; border-radius: 8px; color: #fff; text-align: center; font-style: normal; }
.tbar { height: 10px; flex: none; background: #545454; border-radius: 5px; margin: 0 30px 0 18px; }
.ticks { position: relative; flex: 1; background: #2b2b2b; }
.ticks i { position: absolute; top: 0; bottom: 0; width: 1px; background: #222; }
.ticks i.big { width: 2px; background: #111; }
.ticks em { position: absolute; left: 90px; top: 0; bottom: 0; width: 3px; background: #4772b3; }
.right { flex: 1; display: flex; flex-direction: column; gap: 7px; }
.outliner { position: relative; height: 498px; background: #282828; border-radius: 12px; overflow: hidden; display: flex; flex-direction: column; flex: none; }
.ohead { height: 51px; flex: none; display: flex; padding: 3px 0 0 16px; background: #282828; }
.o2 { margin-left: 13px; }
.w-find { width: 230px; margin-left: 33px; background: #1d1d1d; }
.w-fil { width: 64px; margin-left: 32px; padding-left: 6px; }
.orow { height: 40px; flex: none; display: flex; align-items: center; color: #b8b8b8; }
.orow.alt { background: #2b2b2b; }
.ot { padding-top: 4px; }
.r0 { padding-left: 45px; gap: 14px; }
.r1 { padding-left: 52px; }
.r2 { padding-left: 93px; }
.sel { background: #334d80; } .sel .ot { color: #ffa726; }
.hl { width: 39px; height: 37px; border: 2px solid #757575; background: #4c4c4c; border-radius: 9px; }
.hb { background: #576c95; border-color: #7f8fae; margin: 0 9px 0 14px; }
.r1 .hl { margin: 0 9px 0 15px; }
.nh { width: 39px; margin: 0 9px 0 14px; }
.w1 { width: 120px; } .w2 { width: 101px; } .w3 { width: 96px; }
.flags { margin-left: auto; display: flex; align-items: center; gap: 14px; padding: 0 24px 2px 0; }
.chk { margin-right: 2px; }
.tree { position: absolute; left: 57px; top: 141px; width: 1.500px; height: 100px; background: #606060; }
.props { flex: 1; background: #303030; border-radius: 12px; overflow: hidden; display: flex; flex-direction: column; min-height: 0; }
.phead { height: 50px; flex: none; display: flex; padding: 4px 0 0 16px; }
.pf { margin-left: 58px; width: 231px; }
.w-dd { width: 40px; margin-left: 99px; justify-content: center; padding: 0; }
.pbody { display: flex; flex: 1; min-height: 0; }
.ptabs { width: 57px; flex: none; background: #1d1d1d; padding-top: 15px; display: flex; flex-direction: column; gap: 15.500px; }
.pt { height: 56.200px; display: flex; align-items: center; padding-left: 12px; margin-left: 5px; }
.act { background: #303030; border-radius: 8px 0 0 8px; height: 52px; margin-top: 2px; margin-bottom: 2.200px; }
.pcont { width: 433px; margin-left: 16px; display: flex; flex-direction: column; gap: 4px; flex: none; }
.crumb { height: 84px; flex: none; display: flex; align-items: flex-start; padding: 22px 6px 0 6px; gap: 18px; }
.crumb .pn { margin-left: auto; }
.namef { padding: 0; justify-content: flex-start; height: 40px; margin-bottom: 16px; background: #282828; }
.ni { width: 62px; height: 100%; display: flex; align-items: center; justify-content: space-between; padding: 0 6px 0 8px; border-right: 2px solid #3d3d3d; }
.nn { flex: 1; background: #1d1d1d; line-height: 38px; padding-left: 14px; }
.panel { background: #3d3d3d; border-radius: 8px; height: 50px; flex: none; }
.panel.big { height: 562px; }
.ph { height: 50px; display: flex; align-items: center; position: relative; padding: 1px 0 0 44px; text-shadow: 0 2px 2px #0006; }
.dn { position: absolute; left: 16px; top: 19px; } .rt { position: absolute; left: 22px; top: 16px; }
.grip { margin-left: auto; margin-right: 13px; width: 22px; height: 10px; background: radial-gradient(circle, #a0a0a0 1px, transparent 1.600px) 0 0 / 6px 5px; }
.grp { display: flex; flex-direction: column; gap: 2px; margin-bottom: 14px; }
.big .ph { margin-bottom: 18px; }
.prow { display: flex; align-items: center; height: 38px; text-shadow: 0 2px 2px #0005; }
.prow.fst { height: 36px; }
label { width: 152px; text-align: right; margin-right: 20px; flex: none; }
.num, .enum { width: 163px; height: 100%; background: #545454; display: flex; align-items: center; justify-content: center; flex: none; }
.num.a { border-radius: 6px 0 0 0; } .num.z { border-radius: 0 0 0 6px; }
.enum { background: #282828; border-radius: 6px; justify-content: space-between; padding: 0 5px 0 14px; }
.lk { width: 28px; margin-left: 7px; padding-top: 2px; }
.dot { width: 8px; height: 8px; border-radius: 50%; background: #d8d8d8; margin-left: 23px; }
.delta { display: flex; align-items: center; gap: 12px; padding: 16px 0 0 49px; text-shadow: 0 2px 2px #0006; }
.status { height: 42px; display: flex; align-items: flex-start; padding: 8px 0 0 24px; color: #8b8b8b; border-radius: 0 0 16px 16px; position: relative; }
.status div { display: flex; gap: 16px; }
.s1, .s2 { width: 422px; flex: none; }
.s3 { flex: 1; }
.ver { margin-right: 27px; letter-spacing: 1px; }
.frame { position: absolute; border-style: solid; }
.pink { left: 490px; top: 227px; width: 1669px; height: 76px; border: 14px solid #ff2f6d; border-radius: 7px; border-top-width: 15px; }
.azure { left: 2px; top: 298px; width: 3025px; height: 1558px; border: 14px solid #1c8fff; border-left-width: 13px; border-right-width: 13px; border-radius: 9px; }
.notes { position: absolute; left: 0; top: 0; }
.note text { font-family: 'Noto Sans CJK JP', sans-serif; font-weight: 900; paint-order: stroke; stroke: #fff; stroke-width: 17px; stroke-linejoin: round; }
.note .lat { font-family: Inter, sans-serif; font-weight: 700; }
.n1 { fill: #ff2f6d; filter: drop-shadow(0 3px 2px #0006); }
.n2 { fill: #1c8fff; filter: drop-shadow(0 3px 2px #0006); }
</style>
